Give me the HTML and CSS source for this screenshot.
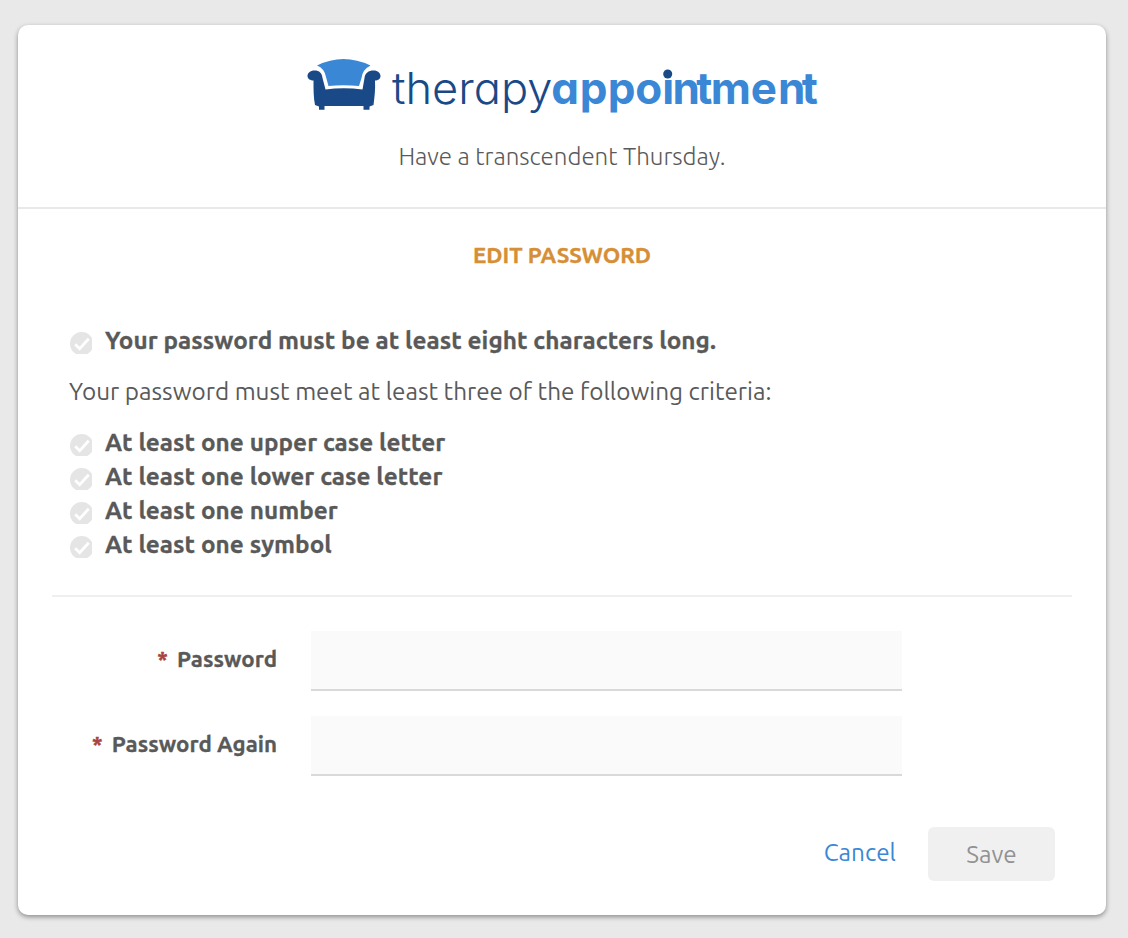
FILE: index.html
```html
<!DOCTYPE html>
<html lang="en">
<head>
  <meta charset="UTF-8">
  <meta name="viewport" content="width=device-width, initial-scale=1.0">
  <title>Edit Password</title>
  <link rel="stylesheet" href="styles.css">
</head>
<body>
  <!-- check icon shared by the criteria list -->
  <svg class="defs" width="0" height="0">
    <symbol id="check" viewBox="0 0 22 22">
      <circle cx="11.700" cy="11.700" r="11.700" fill="#e5e5e5"/>
      <path fill="none" stroke="#fff" stroke-width="2.800" d="M5.200 12.300L9.700 16.700L18.700 6.800"/>
    </symbol>
  </svg>
  <div class="card">
    <div class="header">
      <svg class="logo" width="512" height="60" viewBox="306 56 512 60">
        <path fill="#3a87d6" d="M317 65.500Q330 59 343.500 59T370.500 65.500Q362.500 69.500 361.500 78L359 86Q343 84.500 328.500 86L326 77Q324.500 68.500 317 65.500Z"/>
        <path fill="#194a87" d="M314.500 70.500C319.500 70.500 322 73 322.500 78L325.500 89.500Q343.500 87 362.500 89.500L364.500 78C365 73 368.500 70.500 373.500 70.500C378 70.500 380.500 73 380.500 76C380.500 79 378 80.500 375 80.500C375.500 90 374.500 97 373.500 105L369.500 106.500V109.800H363.500V106H324.500V109.800H319V106.500L315 105C313.500 97 313.500 90 313.500 80.500C310.500 80.500 307.500 79 307.500 76C307.500 73 310 70.500 314.500 70.500Z"/>
        <text class="logo-light" x="392" y="104" textLength="160.500" lengthAdjust="spacingAndGlyphs">therapy</text>
        <text class="logo-bold" y="104" x="551.300 579.800 607.800 635.200 662.300 672.600 696.300 710.700 750.700 778 801.800">appointment</text>
        <circle cx="667.700" cy="74" r="4.500" fill="#194a87"/>
      </svg>
      <p class="greeting">Have a transcendent Thursday.</p>
    </div>
    <div class="content">
      <h1>EDIT PASSWORD</h1>
      <div class="rules">
        <div class="rule"><svg class="check"><use href="#check"/></svg><b>Your password must be at least eight characters long.</b></div>
        <p class="intro">Your password must meet at least three of the following criteria:</p>
        <div class="rule"><svg class="check"><use href="#check"/></svg><b>At least one upper case letter</b></div>
        <div class="rule"><svg class="check"><use href="#check"/></svg><b>At least one lower case letter</b></div>
        <div class="rule"><svg class="check"><use href="#check"/></svg><b>At least one number</b></div>
        <div class="rule"><svg class="check"><use href="#check"/></svg><b>At least one symbol</b></div>
      </div>
      <form>
        <div class="field">
          <label for="password"><span class="req">*</span>Password</label>
          <input type="password" id="password">
        </div>
        <div class="field">
          <label for="passwordAgain"><span class="req">*</span>Password Again</label>
          <input type="password" id="passwordAgain">
        </div>
        <div class="actions">
          <a class="cancel">Cancel</a>
          <button class="save" disabled>Save</button>
        </div>
      </form>
    </div>
  </div>
</body>
</html>
```

FILE: styles.css
```css
* {
  box-sizing: border-box;
}

body {
  margin: 0;
  padding: 25px 22px 0 18px;
  height: 938px;
  background-color: #e9e9e9;
  font-family: Ubuntu, "Noto Sans", sans-serif;
  font-size: 24.3px;
  line-height: 34px;
  color: #595959;
}

h1, p {
  margin: 0;
}

.defs {
  display: block;
}

.card {
  height: 890px;
  background-color: #fff;
  border-radius: 10px;
  box-shadow: 0 2px 5px rgba(0,0,0,0.4);
}

.header {
  height: 184px;
  padding-top: 31px;
  border-bottom: 2px solid #e9e9e9;
  text-align: center;
}

.logo {
  display: block;
  margin: 0 auto;
}

.logo-light, .logo-bold {
  font-family: Inter, sans-serif;
  font-size: 44px;
  font-feature-settings: "cv11";
}

.logo-light {
  font-weight: 300;
  fill: #194a87;
}

.logo-bold {
  font-weight: 700;
  fill: #3a87d6;
}

.greeting {
  margin-top: 24px;
  font-family: Ubuntu, "Open Sans", sans-serif;
  font-size: 24.1px;
  font-weight: 300;
}

.content {
  padding: 29px 34px 0;
}

h1 {
  color: #d68f36;
  font-size: 22.3px;
  line-height: 34px;
  text-align: center;
}

h1, b, label {
  -webkit-text-stroke: 0.3px;
}

.rules {
  padding: 51px 17px 34px;
  border-bottom: 2px solid #efefef;
}

.rule {
  display: flex;
  align-items: center;
}

.rule b {
  letter-spacing: 0.04px;
}

.check {
  width: 22px;
  height: 22px;
  margin: 5px 13px 0 1px;
}

.intro {
  padding: 17px 0;
}

form {
  padding-top: 34px;
}

.field {
  display: flex;
  margin-bottom: 25px;
}

label {
  width: 225px;
  margin-right: 34px;
  font-size: 22.3px;
  font-weight: bold;
  line-height: 55px;
  text-align: right;
}

.req {
  margin-right: 9px;
  color: #a94442;
}

input {
  width: 591px;
  height: 60px;
  border: 0;
  border-bottom: 2px solid #d9d9d9;
  background-color: #fafafa;
}

.actions {
  display: flex;
  justify-content: flex-end;
  margin-top: 51px;
  padding-right: 17px;
}

.cancel {
  margin-right: 32px;
  line-height: 50px;
  color: #3a87d6;
}

.save {
  width: 127px;
  height: 54px;
  border: 0;
  border-radius: 6px;
  background-color: #f0f0f0;
  color: #929292;
  font: inherit;
}
```
